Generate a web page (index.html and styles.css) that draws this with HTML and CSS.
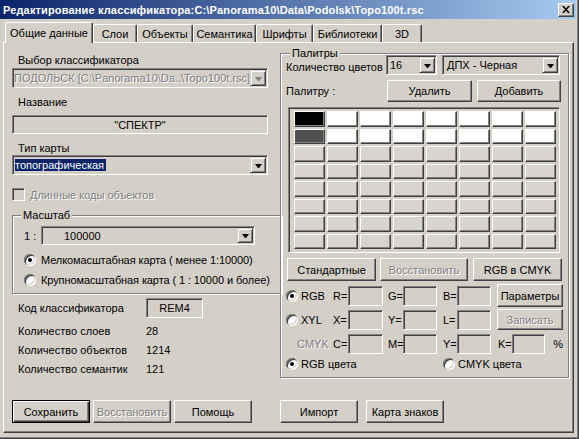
FILE: index.html
```html
<!DOCTYPE html>
<html lang="ru">
<head>
  <meta charset="UTF-8" />
  <title>Редактирование классификатора</title>
  <link rel="stylesheet" href="styles.css">
</head>
<body>
  <div class="window">
    <!-- Title bar -->
    <div class="titlebar">
      <span class="title">Редактирование классификатора:C:\Panorama10\Data\Podolsk\Topo100t.rsc</span>
      <span class="close-btn">
        <svg width="8" height="7" viewBox="0 0 8 7"><path d="M0 0h2l2 2.4L6 0h2L5 3.5 8 7H6L4 4.6 2 7H0l3-3.5z" fill="#000"/></svg>
      </span>
    </div>

    <!-- Tabs -->
    <div class="tabs">
      <div class="tab active">Общие данные</div>
      <div class="tab">Слои</div>
      <div class="tab">Объекты</div>
      <div class="tab">Семантика</div>
      <div class="tab">Шрифты</div>
      <div class="tab">Библиотеки</div>
      <div class="tab">3D</div>
    </div>

    <div class="panel">
      <div class="panel-main">
        <!-- Left column -->
        <div class="col-left">
          <div class="lbl">Выбор классификатора</div>
          <div class="combo combo-disabled combo-rsc">
            <span class="combo-text">ПОДОЛЬСК [C:\Panorama10\Da..\Topo100t.rsc]</span>
            <span class="combo-arrow"></span>
          </div>

          <div class="lbl lbl-name">Название</div>
          <div class="field name-box">"СПЕКТР"</div>

          <div class="lbl lbl-type">Тип карты</div>
          <div class="combo">
            <span class="combo-text"><span class="selected-text">топографическая</span></span>
            <span class="combo-arrow"></span>
          </div>

          <div class="check-row disabled-text">
            <span class="check"></span>
            <span>Длинные коды объектов</span>
          </div>

          <fieldset class="group scale-group">
            <legend>Масштаб</legend>
            <div class="scale-row">
              <span class="scale-lbl">1 :</span>
              <div class="combo combo-scale">
                <span class="combo-text">100000</span>
                <span class="combo-arrow"></span>
              </div>
            </div>
            <div class="radio-row radio-row-first">
              <span class="radio on"></span>
              <span>Мелкомасштабная карта ( менее 1:10000)</span>
            </div>
            <div class="radio-row">
              <span class="radio"></span>
              <span>Крупномасштабная карта ( 1 : 10000 и более)</span>
            </div>
          </fieldset>

          <div class="info-row info-code">
            <span class="info-label">Код классификатора</span>
            <span class="field code-box">REM4</span>
          </div>
          <div class="info-row">
            <span class="info-label">Количество слоев</span>
            <span>28</span>
          </div>
          <div class="info-row">
            <span class="info-label">Количество объектов</span>
            <span>1214</span>
          </div>
          <div class="info-row">
            <span class="info-label">Количество семантик</span>
            <span>121</span>
          </div>
        </div>

        <!-- Right column: palettes -->
        <fieldset class="group palette-group">
          <legend>Палитры</legend>
          <div class="colors-row">
            <span class="colors-lbl">Количество цветов</span>
            <div class="combo combo-count">
              <span class="combo-text">16</span>
              <span class="combo-arrow"></span>
            </div>
            <div class="combo combo-palette">
              <span class="combo-text">ДПХ - Черная</span>
              <span class="combo-arrow"></span>
            </div>
          </div>
          <div class="palette-row">
            <span class="colors-lbl">Палитру :</span>
            <button class="btn btn-del">Удалить</button>
            <button class="btn btn-add">Добавить</button>
          </div>

          <div class="palette-box">
            <div class="cell black"></div><div class="cell white"></div><div class="cell white"></div><div class="cell white"></div>
            <div class="cell white"></div><div class="cell white"></div><div class="cell white"></div><div class="cell white"></div>
            <div class="cell dark"></div><div class="cell white"></div><div class="cell white"></div><div class="cell white"></div>
            <div class="cell white"></div><div class="cell white"></div><div class="cell white"></div><div class="cell white"></div>
            <div class="cell"></div><div class="cell"></div><div class="cell"></div><div class="cell"></div>
            <div class="cell"></div><div class="cell"></div><div class="cell"></div><div class="cell"></div>
            <div class="cell"></div><div class="cell"></div><div class="cell"></div><div class="cell"></div>
            <div class="cell"></div><div class="cell"></div><div class="cell"></div><div class="cell"></div>
            <div class="cell"></div><div class="cell"></div><div class="cell"></div><div class="cell"></div>
            <div class="cell"></div><div class="cell"></div><div class="cell"></div><div class="cell"></div>
            <div class="cell"></div><div class="cell"></div><div class="cell"></div><div class="cell"></div>
            <div class="cell"></div><div class="cell"></div><div class="cell"></div><div class="cell"></div>
            <div class="cell"></div><div class="cell"></div><div class="cell"></div><div class="cell"></div>
            <div class="cell"></div><div class="cell"></div><div class="cell"></div><div class="cell"></div>
            <div class="cell"></div><div class="cell"></div><div class="cell"></div><div class="cell"></div>
            <div class="cell"></div><div class="cell"></div><div class="cell"></div><div class="cell"></div>
          </div>

          <div class="palette-buttons">
            <button class="btn btn-std">Стандартные</button>
            <button class="btn btn-restore" disabled>Восстановить</button>
            <button class="btn btn-cmyk">RGB в CMYK</button>
          </div>

          <div class="color-row row-rgb">
            <span class="radio-lbl"><span class="radio on"></span>RGB</span>
            <span>R=</span><span class="field"></span>
            <span class="eq">G=</span><span class="field"></span>
            <span class="eq eq-b">B=</span><span class="field"></span>
            <button class="btn btn-side">Параметры</button>
          </div>
          <div class="color-row row-xyl">
            <span class="radio-lbl"><span class="radio"></span>XYL</span>
            <span>X=</span><span class="field"></span>
            <span class="eq">Y=</span><span class="field"></span>
            <span class="eq eq-b">L=</span><span class="field"></span>
            <button class="btn btn-side" disabled>Записать</button>
          </div>
          <div class="color-row row-cmyk">
            <span class="cmyk-lbl disabled-text">CMYK</span>
            <span>C=</span><span class="field"></span>
            <span class="eq">M=</span><span class="field"></span>
            <span class="eq eq-b">Y=</span><span class="field"></span>
            <span class="k-cell"><span>K=</span><span class="field k-field"></span><span class="pct">%</span></span>
          </div>

          <div class="mode-row">
            <span class="radio-lbl mode-rgb"><span class="radio on"></span>RGB цвета</span>
            <span class="radio-lbl"><span class="radio"></span>CMYK цвета</span>
          </div>
        </fieldset>
      </div>

      <!-- Bottom buttons -->
      <div class="panel-footer">
        <div class="btn-row">
          <button class="btn btn-foot btn-default">Сохранить</button>
          <button class="btn btn-foot" disabled>Восстановить</button>
          <button class="btn btn-foot">Помощь</button>
        </div>
        <div class="btn-row btn-row-right">
          <button class="btn btn-foot">Импорт</button>
          <button class="btn btn-foot">Карта знаков</button>
        </div>
      </div>
    </div>
  </div>
</body>
</html>
```

FILE: styles.css
```css
/* Classic Windows dialog look */
body {
  margin: 0;
  background: #d4d0c8;
  font-family: "Liberation Sans", Arial, sans-serif;
  font-size: 11px;
  color: #000;
}
* {
  box-sizing: border-box;
}
.window {
  width: 579px;
  height: 439px;
  padding: 0 5px 6px 3px;
  display: flex;
  flex-direction: column;
  background: #d4d0c8;
  box-shadow: inset -1px -1px #404040, inset -2px -2px #808080;
}
/* Title bar */
.titlebar {
  height: 19px;
  margin: 0 -2px 0 -3px;
  padding: 0 2px 0 3px;
  display: flex;
  align-items: center;
  justify-content: space-between;
  background: linear-gradient(to right, #0a246a, #a6caf0);
  color: #fff;
  font-weight: bold;
  font-size: 11px;
  letter-spacing: 0.15px;
  white-space: nowrap;
}
.close-btn {
  width: 16px;
  height: 14px;
  display: flex;
  align-items: center;
  justify-content: center;
  background: #d4d0c8;
  border: 1px solid;
  border-color: #fff #404040 #404040 #fff;
  box-shadow: inset -1px -1px #808080;
}
/* Tabs */
.tabs {
  height: 23px;
  padding-left: 2px;
  display: flex;
  align-items: flex-end;
  position: relative;
  z-index: 1;
}
.tab {
  height: 18px;
  display: flex;
  align-items: center;
  justify-content: center;
  border: 1px solid;
  border-bottom: none;
  border-color: #fff #404040 transparent #fff;
  border-radius: 2px 2px 0 0;
  box-shadow: inset -1px 0 #808080;
  background: #d4d0c8;
}
.tab.active {
  height: 21px;
  margin-bottom: -1px;
  padding-bottom: 1px;
}
.tab:nth-child(1) { width: 88px; }
.tab:nth-child(2) { width: 44px; }
.tab:nth-child(3) { width: 56px; }
.tab:nth-child(4) { width: 63px; }
.tab:nth-child(5) { width: 57px; }
.tab:nth-child(6) { width: 69px; }
.tab:nth-child(7) { width: 40px; }
/* Tab page */
.panel {
  flex: 1;
  display: flex;
  flex-direction: column;
  padding: 4px 5px 9px 8px;
  border: 1px solid;
  border-color: #fff #404040 #404040 #fff;
  box-shadow: inset -1px -1px #808080;
}
.panel-main,
.panel-footer {
  display: grid;
  grid-template-columns: 256px 288px;
  column-gap: 12px;
}
.panel-footer {
  margin-top: auto;
}
/* Common controls */
.lbl {
  height: 13px;
  line-height: 13px;
  padding-left: 6px;
}
.disabled-text,
.btn:disabled,
.combo-disabled .combo-text {
  color: #808080;
  text-shadow: 1px 1px #fff;
}
.field {
  height: 20px;
  display: flex;
  align-items: center;
  justify-content: center;
  background: #d4d0c8;
  border: 1px solid;
  border-color: #808080 #fff #fff #808080;
  box-shadow: inset 1px 1px #404040, inset -1px -1px #d4d0c8;
}
.combo {
  height: 20px;
  padding: 1px;
  display: flex;
  align-items: center;
  background: #d4d0c8;
  border: 1px solid;
  border-color: #808080 #fff #fff #808080;
  box-shadow: inset 1px 1px #404040, inset -1px -1px #d4d0c8;
}
.combo-text {
  flex: 1;
  padding-left: 2px;
  white-space: nowrap;
  overflow: hidden;
}
.combo-arrow {
  width: 16px;
  align-self: stretch;
  display: flex;
  align-items: center;
  justify-content: center;
  border: 1px solid;
  border-color: #d4d0c8 #404040 #404040 #d4d0c8;
  box-shadow: inset 1px 1px #fff, inset -1px -1px #808080;
}
.combo-arrow::after {
  content: "";
  width: 1px;
  border-left: 3px solid transparent;
  border-right: 3px solid transparent;
  border-top: 4px solid #000;
  margin-top: 1px;
}
.combo-disabled .combo-arrow::after {
  border-top-color: #808080;
}
.btn {
  height: 23px;
  padding: 0;
  font: inherit;
  color: #000;
  background: #d4d0c8;
  border: 1px solid;
  border-color: #fff #404040 #404040 #fff;
  box-shadow: inset -1px -1px #808080;
  white-space: nowrap;
}
.btn-default {
  border-color: #000;
  box-shadow: inset 1px 1px #fff, inset -1px -1px #404040, inset -2px -2px #808080;
}
.check {
  width: 13px;
  height: 13px;
  background: #d4d0c8;
  border: 1px solid;
  border-color: #808080 #fff #fff #808080;
  box-shadow: inset 1px 1px #404040, inset -1px -1px #d4d0c8;
}
.radio {
  width: 12px;
  height: 12px;
  flex: none;
  border-radius: 50%;
  background: #fff;
  display: inline-flex;
  align-items: center;
  justify-content: center;
  box-shadow: inset 1px 1px #808080, inset -1px -1px #fff, inset 2px 2px #404040, inset -2px -2px #d4d0c8;
}
.radio.on::after {
  content: "";
  width: 4px;
  height: 4px;
  border-radius: 50%;
  background: #000;
}
.group {
  margin: 0;
  border: 1px solid #808080;
  box-shadow: 1px 1px 0 #fff, inset 1px 1px 0 #fff;
}
.group legend {
  height: 13px;
  line-height: 13px;
  padding: 0 2px;
  background: #d4d0c8;
}
/* Left column */
.col-left {
  padding-top: 7px;
  display: flex;
  flex-direction: column;
}
.combo-rsc {
  margin-top: 1px;
}
.combo-rsc .combo-text {
  padding-left: 0;
}
.lbl-name {
  margin-top: 8px;
}
.name-box {
  height: 19px;
  margin-top: 6px;
}
.lbl-type {
  margin-top: 8px;
}
.selected-text {
  background: #0a246a;
  color: #fff;
  padding: 1px 2px 1px 0;
  margin-left: -1px;
}
.check-row {
  margin-top: 13px;
  height: 13px;
  display: flex;
  align-items: center;
  gap: 5px;
}
.scale-group {
  margin-top: 8px;
  padding: 0 11px 7px 11px;
}
.scale-group legend {
  margin-left: -3px;
}
.scale-row {
  margin-top: 4px;
  display: flex;
  align-items: center;
}
.scale-lbl {
  width: 17px;
}
.combo-scale {
  width: 214px;
  height: 19px;
}
.combo-scale .combo-text {
  padding-left: 21px;
}
.radio-row {
  height: 13px;
  margin-top: 7px;
  display: flex;
  align-items: center;
  gap: 5px;
  white-space: nowrap;
  letter-spacing: -0.1px;
}
.radio-row-first {
  margin-top: 8px;
}
.info-row {
  height: 13px;
  margin-top: 6px;
  padding-left: 6px;
  display: flex;
  align-items: center;
}
.info-code {
  height: 20px;
  margin-top: 4px;
}
.info-label {
  width: 128px;
}
.code-box {
  width: 57px;
}
/* Right column: palettes */
.palette-group {
  padding: 0 5px 7px 5px;
}
.palette-group legend {
  margin-left: 4px;
}
.colors-row {
  margin-top: -5px;
  display: flex;
  align-items: center;
}
.colors-lbl {
  width: 100px;
  padding-top: 4px;
}
.combo-count {
  width: 51px;
}
.combo-palette {
  width: 118px;
  margin-left: 5px;
}
.combo-palette .combo-text {
  padding-left: 3px;
}
.palette-row {
  margin-top: 5px;
  display: flex;
  align-items: center;
}
.palette-row .colors-lbl {
  width: 101px;
  padding-top: 0;
}
.btn-del {
  width: 85px;
  height: 22px;
}
.btn-add {
  width: 84px;
  height: 22px;
  margin-left: 5px;
}
.palette-box {
  width: 272px;
  height: 146px;
  margin: 5px 0 0 2px;
  padding: 3px 3px 3px 5px;
  display: grid;
  grid-template-columns: repeat(8, 31px);
  grid-template-rows: repeat(8, 1fr);
  gap: 2px;
  border: 1px solid;
  border-color: #808080 #fff #fff #808080;
  box-shadow: inset 1px 1px #404040;
}
.cell {
  background: #d8d5d0;
  border: 1px solid;
  border-color: #fff #404040 #404040 #fff;
  box-shadow: inset -1px -1px #808080;
}
.cell.white { background: #fff; }
.cell.black { background: #000; }
.cell.dark { background: #505050; }
.palette-buttons {
  margin: 5px 0 0 1px;
  display: flex;
}
.btn-std { width: 89px; }
.btn-restore { width: 88px; margin-left: 4px; }
.btn-cmyk { width: 89px; margin-left: 5px; }
.color-row {
  display: grid;
  grid-template-columns: 47px 15px 35px 20px 34px 20px 34px 72px;
  align-items: center;
}
.row-rgb {
  height: 23px;
  margin-top: 3px;
}
.row-xyl {
  height: 21px;
  margin-top: 2px;
}
.row-cmyk {
  height: 21px;
  margin-top: 3px;
}
.radio-lbl {
  display: flex;
  align-items: center;
  gap: 3px;
}
.eq {
  padding-left: 5px;
}
.eq-b {
  padding-left: 6px;
}
.btn-side {
  width: 66px;
  height: 23px;
  margin-left: 6px;
}
.row-xyl .btn-side {
  height: 21px;
}
.cmyk-lbl {
  padding-left: 11px;
}
.k-cell {
  padding-left: 7px;
  display: flex;
  align-items: center;
}
.k-cell span:first-child {
  width: 14px;
}
.k-field {
  width: 35px;
}
.pct {
  margin-left: 8px;
}
.mode-row {
  height: 13px;
  margin-top: 3px;
  display: flex;
  align-items: center;
}
.mode-rgb {
  width: 157px;
}
/* Bottom buttons */
.btn-row {
  display: flex;
  gap: 3px;
}
.btn-row-right {
  gap: 8px;
}
.btn-foot {
  width: 78px;
}
```
